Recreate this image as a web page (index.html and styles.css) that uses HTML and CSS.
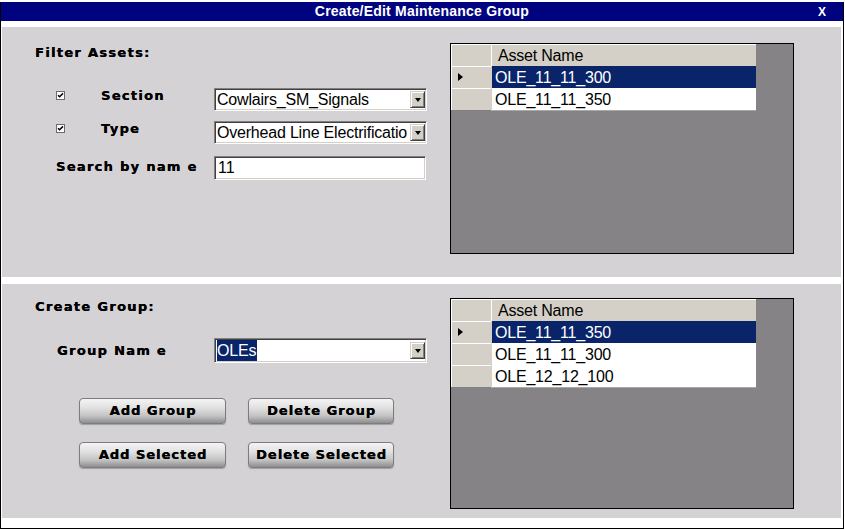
FILE: index.html
```html
<!DOCTYPE html>
<html>
<head>
<meta charset="utf-8">
<link rel="stylesheet" href="styles.css">
</head>
<body>
<div class="window">
  <div class="titlebar">
    <span></span>
    <span class="title">Create/Edit Maintenance Group</span>
    <span class="close">X</span>
  </div>
  <div class="content">
    <section class="panel panel-filter">
      <div class="form">
        <h2 class="heading">Filter Assets:</h2>
        <div class="row row-section">
          <span class="check"><svg width="9" height="9" viewBox="0 0 9 9"><rect x="0.5" y="0.5" width="8" height="8" fill="#fff" stroke="#6c6c6c"/><path d="M2 4.2 L3.6 5.8 L7 2.4" stroke="#000" stroke-width="1.5" fill="none"/></svg></span>
          <span class="label label-check">Section</span>
          <div class="combo"><span class="combo-text">Cowlairs_SM_Signals</span><span class="combo-btn"><span class="tri-down"></span></span></div>
        </div>
        <div class="row row-type">
          <span class="check"><svg width="9" height="9" viewBox="0 0 9 9"><rect x="0.5" y="0.5" width="8" height="8" fill="#fff" stroke="#6c6c6c"/><path d="M2 4.2 L3.6 5.8 L7 2.4" stroke="#000" stroke-width="1.5" fill="none"/></svg></span>
          <span class="label label-check">Type</span>
          <div class="combo"><span class="combo-text">Overhead Line Electrificatio</span><span class="combo-btn"><span class="tri-down"></span></span></div>
        </div>
        <div class="row row-search">
          <span class="label label-wide">Search by nam e</span>
          <div class="textbox">11</div>
        </div>
      </div>
      <div class="grid">
        <div class="grid-row">
          <div class="rh rh-head"></div>
          <div class="ch">Asset Name</div>
        </div>
        <div class="grid-row">
          <div class="rh"><span class="tri-right"></span></div>
          <div class="cell selected">OLE_11_11_300</div>
        </div>
        <div class="grid-row">
          <div class="rh"></div>
          <div class="cell">OLE_11_11_350</div>
        </div>
      </div>
    </section>
    <section class="panel panel-group">
      <div class="form">
        <h2 class="heading">Create Group:</h2>
        <div class="row row-group">
          <span class="label label-wide">Group Nam e</span>
          <div class="combo combo-tall"><span class="combo-text"><span class="hl">OLEs</span></span><span class="combo-btn"><span class="tri-down"></span></span></div>
        </div>
        <div class="buttons">
          <button class="btn">Add Group</button>
          <button class="btn btn-b">Delete Group</button>
          <button class="btn">Add Selected</button>
          <button class="btn btn-b">Delete Selected</button>
        </div>
      </div>
      <div class="grid">
        <div class="grid-row">
          <div class="rh rh-head"></div>
          <div class="ch">Asset Name</div>
        </div>
        <div class="grid-row">
          <div class="rh"><span class="tri-right"></span></div>
          <div class="cell selected">OLE_11_11_350</div>
        </div>
        <div class="grid-row">
          <div class="rh"></div>
          <div class="cell">OLE_11_11_300</div>
        </div>
        <div class="grid-row">
          <div class="rh"></div>
          <div class="cell">OLE_12_12_100</div>
        </div>
      </div>
    </section>
  </div>
</div>
</body>
</html>
```
FILE: styles.css
```css
* { box-sizing: border-box; }
body {
  margin: 0;
  background: #fff;
  font-family: "Liberation Sans", Arial, sans-serif;
}
.window {
  margin-top: 2px;
  width: 844px;
  height: 527px;
  border-left: 1px solid #000;
  border-right: 1px solid #000;
  border-bottom: 1px solid #000;
  background: #fff;
}
.titlebar {
  height: 19px;
  background: #00037f;
  color: #fff;
  display: grid;
  grid-template-columns: 1fr auto 1fr;
  align-items: center;
}
.title {
  font-size: 14px;
  font-weight: bold;
  line-height: 19px;
  letter-spacing: 0.2px;
}
.close {
  justify-self: end;
  margin-right: 17px;
  font-size: 12px;
  font-weight: bold;
}
.content {
  padding: 6px 2px 0 1px;
  display: flex;
  flex-direction: column;
  gap: 7px;
}
.panel {
  background: #d4d2d5;
  display: flex;
  padding-left: 33px;
}
.panel-filter { height: 250px; padding-top: 16px; }
.panel-group { height: 234px; padding-top: 14px; }
.form {
  width: 415px;
  display: flex;
  flex-direction: column;
}
.heading,
.label,
.btn {
  font-family: "DejaVu Sans", sans-serif;
  font-weight: bold;
  font-size: 13px;
  letter-spacing: 1.3px;
  color: #000;
  text-shadow: 0.3px 0 0 #000;
}
.heading {
  margin: 2px 0 0;
  line-height: 15px;
}
.panel-group .heading { margin-top: 1px; }
.row {
  display: flex;
  align-items: center;
  margin-left: 21px;
}
.row-section { margin-top: 28px; }
.row-type { margin-top: 10px; }
.row-search { margin-top: 12px; }
.row-group { margin-top: 24px; margin-left: 22px; }
.check {
  width: 45px;
  height: 9px;
  display: flex;
  margin-bottom: 8px;
}
.label {
  line-height: 15px;
}
.label-check { width: 113px; margin-bottom: 8px; }
.row-search .label-wide { width: 158px; margin-bottom: 3px; }
.row-group .label-wide { width: 157px; }
.combo {
  width: 213px;
  height: 23px;
  background: #fff;
  border-top: 1px solid #808080;
  border-left: 1px solid #808080;
  border-right: 1px solid #fff;
  border-bottom: 1px solid #fff;
  box-shadow: inset 1px 1px 0 #404040, inset -1px -1px 0 #d4d0c8;
  display: flex;
  align-items: center;
  padding: 0 1px 0 2px;
  overflow: hidden;
}
.combo-tall { height: 25px; }
.combo-text {
  flex: 1;
  min-width: 0;
  white-space: nowrap;
  overflow: hidden;
  font-size: 16px;
  line-height: 19px;
  color: #000;
  letter-spacing: -0.2px;
}
.hl {
  background: #0a246a;
  color: #fff;
  display: inline-block;
  line-height: 21px;
  padding-right: 1px;
}
.combo-btn {
  flex: none;
  width: 15px;
  height: 17px;
  background: #d4d0c8;
  border-top: 1px solid #d4d0c8;
  border-left: 1px solid #d4d0c8;
  border-right: 1px solid #404040;
  border-bottom: 1px solid #404040;
  box-shadow: inset 1px 1px 0 #fff, inset -1px -1px 0 #808080;
  display: flex;
  align-items: center;
  justify-content: center;
}
.tri-down {
  width: 0;
  height: 0;
  border-left: 3.5px solid transparent;
  border-right: 3.5px solid transparent;
  border-top: 4px solid #000;
  margin-top: 1px;
}
.textbox {
  width: 212px;
  height: 24px;
  background: #fff;
  border-top: 1px solid #808080;
  border-left: 1px solid #808080;
  border-right: 1px solid #fff;
  border-bottom: 1px solid #fff;
  box-shadow: inset 1px 1px 0 #404040, inset -1px -1px 0 #d4d0c8;
  font-size: 16px;
  line-height: 22px;
  padding-left: 3px;
  color: #000;
}
.buttons {
  margin: 35px 0 0 44px;
  display: grid;
  grid-template-columns: 147px 146px;
  column-gap: 22px;
  row-gap: 18px;
}
.btn {
  height: 26px;
  padding: 0 0 2px 1px;
  border: 1px solid #7c7c7c;
  border-radius: 4px;
  background: linear-gradient(#f4f4f4, #e2e2e2 35%, #c4c4c4 70%, #8e8e8e);
  box-shadow: 0 1px 1px rgba(0, 0, 0, 0.25);
  letter-spacing: 1px;
  white-space: nowrap;
}
.grid {
  width: 344px;
  height: 211px;
  border: 1px solid #000;
  background: #858386;
  display: flex;
  flex-direction: column;
  align-self: flex-start;
}
.grid-row {
  display: grid;
  grid-template-columns: 40px 265px;
  height: 22px;
}
.rh {
  background: #d4d0c8;
  border-bottom: 1px solid #808080;
  box-shadow: inset 1px 1px 0 #fff;
  display: flex;
  align-items: center;
  padding-left: 6px;
}
.ch {
  background: #d4d0c8;
  border-bottom: 1px solid #9a9a9a;
  border-left: 1px solid #fff;
  box-shadow: inset 0 1px 0 #fff;
  font-size: 16px;
  line-height: 21px;
  padding: 1px 0 0 6px;
  color: #000;
  letter-spacing: -0.2px;
}
.cell {
  background: #fff;
  border-bottom: 1px solid #a8a8a8;
  border-left: 1px solid #d4d0c8;
  font-size: 16px;
  line-height: 21px;
  padding: 1px 0 0 3px;
  color: #000;
  letter-spacing: -0.2px;
}
.cell.selected {
  background: #0a246a;
  color: #fff;
}
.tri-right {
  width: 0;
  height: 0;
  border-top: 4px solid transparent;
  border-bottom: 4px solid transparent;
  border-left: 5px solid #000;
  margin-left: 1px;
}
```
